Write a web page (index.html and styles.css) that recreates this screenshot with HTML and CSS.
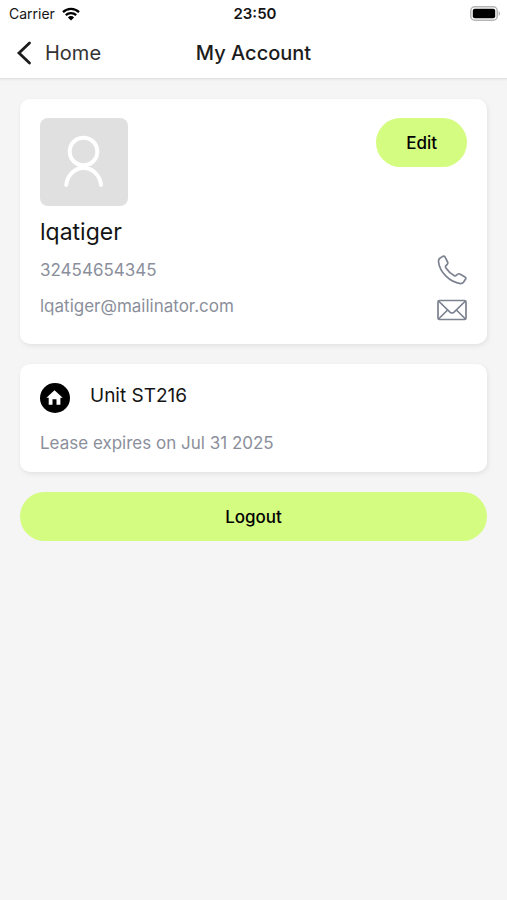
FILE: index.html
```html
<!DOCTYPE html>
<html lang="en">
<head>
<meta charset="utf-8">
<meta name="viewport" content="width=device-width, initial-scale=1">
<title>My Account</title>
<link rel="stylesheet" href="styles.css">
</head>
<body>
<header class="top">
  <div class="status">
    <div class="carrier">
      <span>Carrier</span>
      <svg class="wifi" viewBox="0 0 18 14" aria-hidden="true">
        <path d="M1 5.2a11.5 11.5 0 0 1 16 0M3.8 8.2a7.5 7.5 0 0 1 10.4 0" fill="none" stroke="#000" stroke-width="2.3"/>
        <path d="M5.9 10.4a4.4 4.4 0 0 1 6.2 0L9 13.6z" fill="#000"/>
      </svg>
    </div>
    <span class="time">23:50</span>
    <svg class="battery" viewBox="0 0 31 15" aria-hidden="true">
      <rect x="0.8" y="0.8" width="26.4" height="13.4" rx="4" fill="#fff" stroke="#b4b4b4" stroke-width="1.5"/>
      <rect x="2.8" y="2.8" width="22.4" height="9.4" rx="2" fill="#000"/>
      <path d="M28.6 5.2c1.9.6 1.9 4 0 4.6z" fill="#b4b4b4"/>
    </svg>
  </div>
  <nav class="nav">
    <a class="back" href="#">
      <svg class="chevron" viewBox="0 0 16 24" aria-hidden="true"><path d="M13.500 2 3 12l10.500 10" fill="none" stroke="#1c1c1c" stroke-width="2.8" stroke-linecap="round" stroke-linejoin="miter"/></svg>
      <span>Home</span>
    </a>
    <h1 class="title">My Account</h1>
  </nav>
</header>
<main class="content">
  <section class="card profile">
    <div class="profile-top">
      <div class="avatar">
        <svg viewBox="0 0 88 88" aria-hidden="true"><g fill="none" stroke="#fff" stroke-width="4" stroke-linecap="round"><circle cx="43.500" cy="33.500" r="13.800"/><path d="M26.200 67A17.500 19 0 0 1 61 67"/></g></svg>
      </div>
      <button class="button edit" type="button">Edit</button>
    </div>
    <h2 class="name">lqatiger</h2>
    <div class="contact">
      <span>32454654345</span>
      <svg class="phone" viewBox="0 0 30 30" aria-hidden="true"><path d="M2.800 3.300 5.800 1.400Q7.200.8 8.100 2.100L10.600 7Q11.200 8.300 10.200 9.300L8.800 10.800Q8.200 11.600 8.800 12.700C11 16.200 14 18.900 17.400 20.700Q18.400 21.200 19.200 20.400L20.500 19.300Q21.600 18.400 22.800 19L28 21.900Q29.300 22.800 28.600 24L26.500 27.300Q25.600 28.600 23.500 28.600C13 27.200 2.600 17.500 1.500 6.500Q1.400 4.300 2.800 3.300Z" fill="none" stroke="#7d8290" stroke-width="1.700" stroke-linejoin="round"/></svg>
    </div>
    <div class="contact">
      <span>lqatiger@mailinator.com</span>
      <svg class="mail" viewBox="0 0 30 22" aria-hidden="true"><g fill="none" stroke="#7d8290" stroke-width="1.700" stroke-linejoin="round"><rect x="1" y="1.500" width="28" height="19" rx="1.500"/><path d="M1.500 2 13.200 13.300Q15 14.700 16.800 13.300L28.500 2M1.500 20 10.600 11M28.500 20 19.400 11"/></g></svg>
    </div>
  </section>
  <section class="card unit">
    <div class="unit-head">
      <svg class="home" viewBox="0 0 30 30" aria-hidden="true"><circle cx="15" cy="15" r="15" fill="#000"/><path d="M14.500 7.200 22.700 14.800H20.400V21.700H16.500V16.200H12.500V21.700H8.700V14.800H6.400Z" fill="#fff"/></svg>
      <h2 class="unit-name">Unit ST216</h2>
    </div>
    <p class="lease">Lease expires on Jul 31 2025</p>
  </section>
  <button class="button" type="button">Logout</button>
</main>
</body>
</html>
```
FILE: styles.css
```css
* {
  box-sizing: border-box;
}

body {
  margin: 0;
  min-height: 100vh;
  background: #f5f5f5;
  color: #141414;
  font-family: Inter, "Liberation Sans", sans-serif;
  font-size: 17px;
}

h1,
h2,
p {
  margin: 0;
  font-weight: 400;
}

svg {
  display: block;
  flex: none;
}

.top {
  background: #fff;
  border-bottom: 1px solid #e2e2e2;
  box-shadow: 0 1px 2px rgba(0, 0, 0, 0.06);
}

.status,
.nav {
  display: grid;
  grid-template-columns: 1fr auto 1fr;
  align-items: center;
}

.status {
  height: 27px;
  padding: 0 6px 0 9px;
  font-size: 14px;
}

.carrier {
  display: flex;
  align-items: center;
  gap: 7px;
}

.wifi {
  width: 18px;
  height: 14px;
}

.time {
  font-size: 15px;
  font-weight: 600;
}

.battery {
  width: 31px;
  height: 15px;
  justify-self: end;
}

.nav {
  height: 51px;
  padding: 0 16px;
  font-size: 20px;
}

.back {
  display: flex;
  align-items: center;
  gap: 13px;
  color: #333;
  text-decoration: none;
}

.chevron {
  width: 16px;
  height: 24px;
}

.title {
  font-size: 20px;
  font-weight: 500;
  color: #1c1c1c;
}

.content {
  display: flex;
  flex-direction: column;
  gap: 20px;
  padding: 20px;
}

.card {
  padding: 19px 20px;
  border-radius: 10px;
  background: #fff;
  box-shadow: 1px 2px 5px rgba(0, 0, 0, 0.08);
}

.profile {
  padding-bottom: 18px;
}

.profile-top {
  display: flex;
  justify-content: space-between;
  align-items: flex-start;
}

.avatar {
  width: 88px;
  height: 88px;
  border-radius: 8px;
  background: #e0e0e0;
}

.button {
  height: 49px;
  padding: 0 30px;
  border: 0;
  border-radius: 25px;
  background: #d4fc80;
  color: #000;
  font: 500 17px Inter, "Liberation Sans", sans-serif;
}

.name {
  padding: 10px 0 6px;
  font-size: 23px;
  line-height: 32px;
}

.contact {
  display: flex;
  justify-content: space-between;
  height: 36px;
  color: #8b8f9b;
  line-height: 32px;
}

.phone {
  width: 30px;
  height: 30px;
  margin-top: 1px;
}

.mail {
  width: 30px;
  height: 22px;
  margin-top: 9px;
}

.unit-head {
  display: flex;
  gap: 20px;
}

.home {
  width: 30px;
  height: 30px;
}

.unit-name {
  font-size: 19px;
  line-height: 26px;
}

.lease {
  margin-top: 20px;
  color: #8b8f9b;
  line-height: 20px;
}
```
